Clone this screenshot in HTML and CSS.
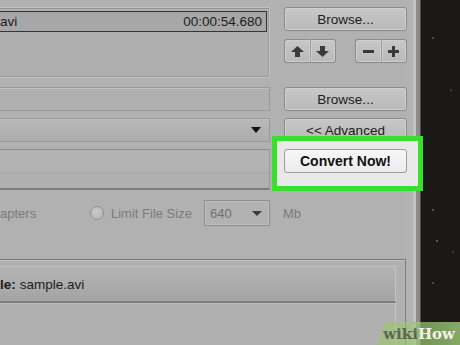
FILE: index.html
```html
<!DOCTYPE html>
<html lang="en">
<head>
    <meta charset="UTF-8">
    <title>Video Converter</title>
    <link rel="stylesheet" href="styles.css">
</head>
<body>
    <div class="window">
        <div class="content">
            <div class="row row-files">
                <div class="listbox">
                    <div class="list-item">
                        <span class="name">avi</span>
                        <span class="time">00:00:54.680</span>
                    </div>
                </div>
                <div class="side">
                    <button class="btn">Browse...</button>
                    <div class="btn-groups">
                        <div class="btn-group">
                            <button class="btn icon"><svg width="13" height="11" viewBox="0 0 13 11"><path d="M6.5 0 L13 6 H9 V11 H4 V6 H0 Z" fill="#3a3a3a"/></svg></button>
                            <button class="btn icon"><svg width="13" height="11" viewBox="0 0 13 11"><path d="M6.5 11 L13 5 H9 V0 H4 V5 H0 Z" fill="#3a3a3a"/></svg></button>
                        </div>
                        <div class="btn-group">
                            <button class="btn icon"><svg width="11" height="11" viewBox="0 0 11 11"><rect x="0" y="4" width="11" height="3" fill="#3a3a3a"/></svg></button>
                            <button class="btn icon"><svg width="11" height="11" viewBox="0 0 11 11"><path d="M4 0 H7 V4 H11 V7 H7 V11 H4 V7 H0 V4 H4 Z" fill="#3a3a3a"/></svg></button>
                        </div>
                    </div>
                </div>
            </div>

            <div class="row row-output">
                <div class="field"></div>
                <button class="btn">Browse...</button>
            </div>

            <div class="row row-profile">
                <div class="field select"><span class="caret"></span></div>
                <button class="btn">&lt;&lt; Advanced</button>
            </div>

            <div class="row row-convert">
                <div class="field tall"></div>
                <button class="btn convert">Convert Now!</button>
            </div>

            <div class="options">
                <span class="opt-text chapters">apters</span>
                <span class="radio"></span>
                <span class="opt-text">Limit File Size</span>
                <div class="size-select"><span>640</span><span class="caret small"></span></div>
                <span class="opt-text unit">Mb</span>
            </div>

            <div class="frame">
                <div class="frame-inner">
                    <div class="info-bar"><b>le:</b> sample.avi</div>
                    <div class="info-body"></div>
                </div>
            </div>
        </div>
        <div class="edge"></div>
    </div>
    <div class="desk"></div>

    <div class="highlight"></div>
    <div class="watermark"><span class="wiki">wiki</span><span class="how">How</span></div>
</body>
</html>
```

FILE: styles.css
```css
body {
    margin: 0;
    width: 460px;
    height: 345px;
    overflow: hidden;
    display: flex;
    background-color: #1b1917;
    font-family: "Liberation Sans", Arial, sans-serif;
    font-size: 13.5px;
    color: #1c1c1c;
}
.window {
    width: 421px;
    height: 345px;
    display: flex;
    background-color: #b1b1b1;
}
.content {
    width: 407px;
    padding-top: 7px;
}
.edge {
    width: 14px;
    background: linear-gradient(to right, #b3b3b3 0 6px, #c2c2c2 6px 9px, #8c8c8c 9px 13px, #4a4a4a 13px);
}
.desk {
    flex: 1;
    background-color: #1b1917;
    background-image:
        radial-gradient(circle at 12px 38px, #4a4a48 0 1px, transparent 1.5px),
        radial-gradient(circle at 30px 90px, #3e3e3c 0 1px, transparent 1.5px),
        radial-gradient(circle at 12px 210px, #555 0 1px, transparent 1.5px),
        radial-gradient(circle at 16px 241px, #555 0 1px, transparent 1.5px),
        radial-gradient(circle at 12px 283px, #4a4a48 0 1px, transparent 1.5px),
        radial-gradient(circle at 32px 252px, #3a3a38 0 1px, transparent 1.5px);
}

.row {
    display: grid;
    grid-template-columns: 270px 123px;
    column-gap: 14px;
}
.row-files {
    height: 71px;
}
.row-output {
    margin-top: 9px;
    height: 23px;
}
.row-profile {
    margin-top: 8px;
    height: 23px;
}
.row-convert {
    height: 49px;
}

.btn {
    font-family: inherit;
    font-size: 13.5px;
    color: #1c1c1c;
    height: 24px;
    padding: 0;
    border: 1px solid #8b8b8b;
    border-radius: 3px;
    background: linear-gradient(#c7c7c7, #b9b9b9);
    box-shadow: inset 0 0 0 1px #cfcfcf;
}
.side {
    display: flex;
    flex-direction: column;
    gap: 8px;
}
.btn-groups {
    display: flex;
    justify-content: space-between;
}
.btn-group {
    display: flex;
    width: 52px;
}
.btn-group .btn {
    flex: 1;
    display: flex;
    align-items: center;
    justify-content: center;
}
.btn-group .btn:first-child {
    border-radius: 3px 0 0 3px;
    border-right-color: #9a9a9a;
}
.btn-group .btn:last-child {
    border-radius: 0 3px 3px 0;
    border-left: none;
}

.listbox {
    box-sizing: border-box;
    height: 71px;
    border: 1px solid #c2c2c2;
    border-left: none;
    box-shadow: inset 0 1px 0 #959595, inset -1px 0 0 #9a9a9a, inset 0 -1px 0 #9a9a9a;
    padding: 3px 2px 0 0;
    background-color: #afafaf;
}
.list-item {
    display: flex;
    justify-content: space-between;
    align-items: center;
    height: 19px;
    border: 1px solid #353535;
    border-left: none;
    background-color: #a7a7a7;
    padding-right: 4px;
}

.field {
    box-sizing: border-box;
    border: 1px solid #9a9a9a;
    border-left: none;
    box-shadow: inset 0 1px 0 #c0c0c0;
    background-color: #b0b0b0;
}
.select {
    display: flex;
    justify-content: flex-end;
    align-items: center;
    padding-right: 8px;
    background: linear-gradient(#b9b9b9, #adadad);
}
.caret {
    width: 0;
    height: 0;
    border-left: 5px solid transparent;
    border-right: 5px solid transparent;
    border-top: 6px solid #111;
}
.caret.small {
    border-top-color: #3c3c3c;
    border-left-width: 5px;
    border-right-width: 5px;
    border-top-width: 5px;
}
.tall {
    margin-top: 8px;
    height: 41px;
    border-top: 1px solid #8e8e8e;
    border-bottom: 2px solid #7d7d7d;
    box-shadow: none;
    background: linear-gradient(#b3b3b3 0 22px, #a9a9a9 22px 23px, #b0b0b0 23px);
}
.convert {
    position: relative;
    z-index: 2;
    margin-top: 8px;
    font-weight: bold;
    font-size: 14px;
    color: #111;
    border-color: #9c9c9c;
    background: linear-gradient(#f7f7f7, #ececec);
    box-shadow: none;
}

.options {
    display: flex;
    align-items: center;
    margin-top: 10px;
    height: 26px;
    font-size: 13px;
}
.opt-text {
    color: #7b7b7b;
}
.chapters {
    width: 90px;
}
.radio {
    box-sizing: border-box;
    width: 14px;
    height: 14px;
    border: 1px solid #8f8f8f;
    border-radius: 50%;
    background: radial-gradient(circle at 40% 40%, #c9c9c9, #b2b2b2);
    margin-right: 7px;
}
.size-select {
    box-sizing: border-box;
    width: 66px;
    height: 26px;
    margin-left: 12px;
    margin-right: 13px;
    border: 1px solid #8e8e8e;
    box-shadow: inset 0 0 0 1px #bdbdbd;
    background-color: #b2b2b2;
    display: flex;
    align-items: center;
    justify-content: space-between;
    padding: 0 7px 0 5px;
    color: #707070;
}

.frame {
    margin-top: 33px;
    width: 406px;
    height: 86px;
    box-sizing: border-box;
    border-top: 1px solid #777;
    border-right: 1px solid #7e7e7e;
    box-shadow: inset 0 1px 0 #c4c4c4;
    padding-top: 6px;
}
.frame-inner {
    width: 396px;
    height: 100%;
}
.info-bar {
    box-sizing: border-box;
    height: 37px;
    display: flex;
    align-items: center;
    gap: 4px;
    border-top: 1px solid #c0c0c0;
    border-right: 1px solid #c4c4c4;
    border-bottom: 2px solid #7f7f7f;
    background: linear-gradient(#b4b4b4, #a4a4a4);
    font-size: 13.5px;
}
.info-body {
    height: 45px;
    box-sizing: border-box;
    border-top: 1px solid #bdbdbd;
    border-right: 1px solid #c4c4c4;
    background-color: #b0b0b0;
}

.highlight {
    position: absolute;
    left: 272px;
    top: 136px;
    width: 151px;
    height: 55px;
    box-sizing: border-box;
    border: 5px solid #36e02c;
    background-color: #e9e9e9;
    z-index: 1;
}
.watermark {
    position: absolute;
    left: 376px;
    top: 322px;
    width: 84px;
    height: 23px;
    display: flex;
    align-items: center;
    justify-content: flex-end;
    padding-right: 5px;
    box-sizing: border-box;
    background: linear-gradient(to right, rgba(150, 200, 100, 0.55), rgba(160, 205, 120, 0.8));
    clip-path: polygon(10px 0, 100% 0, 100% 100%, 0 100%);
    font-family: "DejaVu Serif", serif;
    font-weight: bold;
    font-size: 15px;
}
.wiki {
    color: #5d6656;
}
.how {
    color: #eef3e6;
}
```
